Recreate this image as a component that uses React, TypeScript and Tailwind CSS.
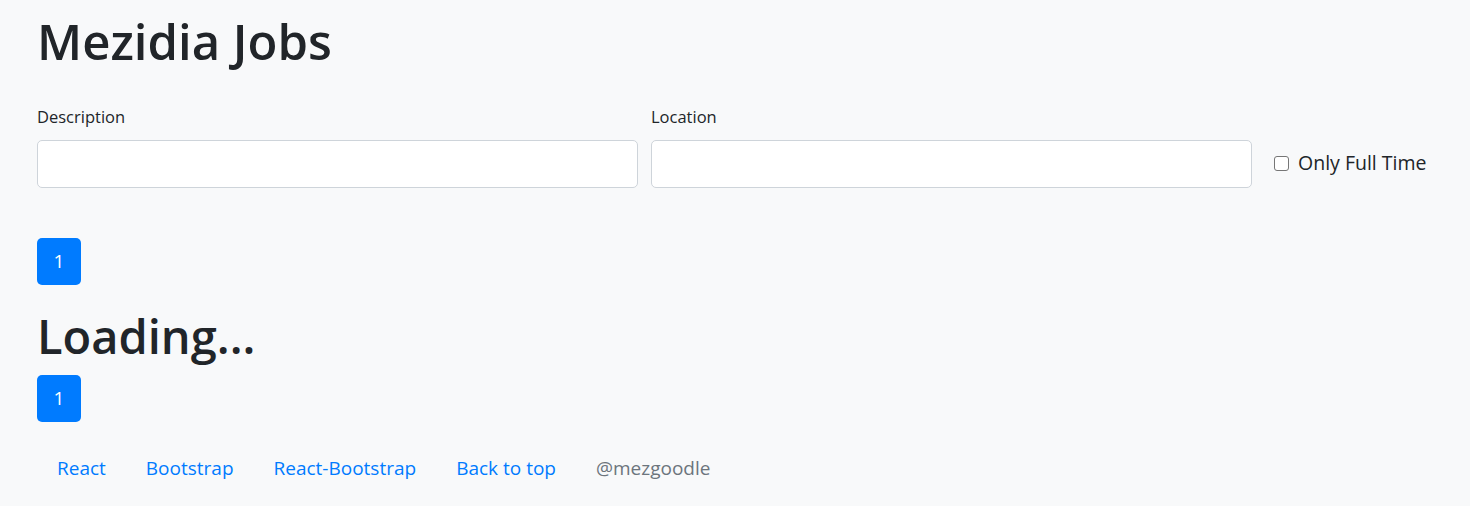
import React from 'react';

const font = { fontFamily: '"Open Sans", "Noto Sans", sans-serif' };

const PageButton: React.FC = () => (
    <div className="flex">
        <a
            href="#"
            className="flex h-[47px] w-[44px] items-center justify-center rounded-[5px] bg-[#007bff] text-[19px] text-white"
        >
            1
        </a>
    </div>
);

const links = ['React', 'Bootstrap', 'React-Bootstrap', 'Back to top'];

export default function App() {
    return (
        <div className="min-h-screen bg-[#f8f9fa] px-[37px] text-[#212529]" style={font}>
            <h1 className="pt-[11px] text-[49px] font-semibold leading-[60px]">Mezidia Jobs</h1>

            <form className="mt-[34px] flex items-start">
                <div className="flex w-[601px] flex-col">
                    <label className="text-[16.5px] leading-[24px]">Description</label>
                    <input className="mt-[11px] h-[48px] rounded-[5px] border border-[#ced4da] bg-white px-4 text-[20px] outline-none" />
                </div>
                <div className="ml-[13px] flex w-[601px] flex-col">
                    <label className="text-[16.5px] leading-[24px]">Location</label>
                    <input className="mt-[11px] h-[48px] rounded-[5px] border border-[#ced4da] bg-white px-4 text-[20px] outline-none" />
                </div>
                <label className="ml-[22px] mt-[44px] flex items-center gap-[9px] text-[19.5px] leading-[28px]">
                    <span className="h-[15px] w-[15px] rounded-[3px] border border-[#767676] bg-white" />
                    Only Full Time
                </label>
            </form>

            <div className="mt-[50px]">
                <PageButton />
            </div>

            <h1 className="mt-[21px] text-[47px] font-semibold leading-[60px]">Loading...</h1>

            <div className="mt-[9px]">
                <PageButton />
            </div>

            <nav className="mt-[31px] flex text-[19px] leading-[30px]">
                {links.map((l) => (
                    <a key={l} href="#" className="px-[20px] text-[#007bff]">
                        {l}
                    </a>
                ))}
                <span className="px-[20px] text-[#6c757d]">@mezgoodle</span>
            </nav>
        </div>
    );
}
